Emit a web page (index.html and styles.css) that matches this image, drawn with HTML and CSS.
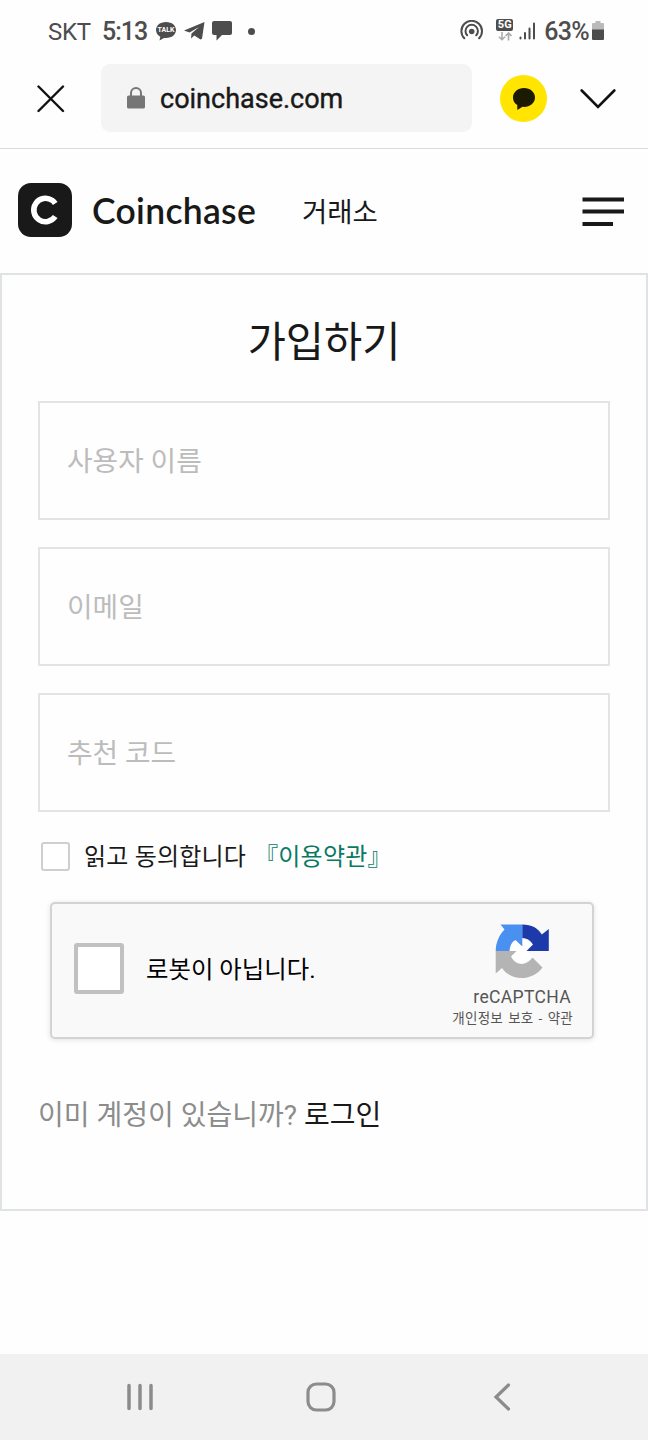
FILE: index.html
```
<!DOCTYPE html>
<html lang="ko">

<head>
    <meta charset="UTF-8">
    <meta name="viewport" content="width=device-width, initial-scale=1.0">
    <title>Coinchase</title>
    <link rel="stylesheet" href="styles.css">
</head>

<body>
    <div class="status-bar">
        <span class="carrier">SKT</span>
        <span class="time">5:13</span>
        <span class="talk-icon">
            <svg width="22" height="20" viewBox="0 0 22 20">
                <path fill="#4d4d4d" d="M11 1C5 1 1 4.600 1 9c0 2.900 1.700 5.300 4.300 6.700L4.500 19.500 9 16.900c.7.100 1.300.100 2 .100 6 0 10-3.600 10-8S17 1 11 1z" />
            </svg>
            <b>TALK</b>
        </span>
        <svg class="telegram-icon" width="21" height="18" viewBox="0 0 21 18">
            <path fill="#4d4d4d" d="M0 8.500 20.500 0 18 16.800 16.500 17.500 10.300 13.500 7 16.500 7.500 11.500 15 5 5.500 10.500z" />
        </svg>
        <svg class="sms-icon" width="20" height="20" viewBox="0 0 20 20">
            <path fill="#4d4d4d" d="M2 0H18Q20 0 20 2V12Q20 14 18 14H10L4.500 19.500V14H2Q0 14 0 12V2Q0 0 2 0z" />
        </svg>
        <span class="dot"></span>

        <div class="status-right">
            <svg class="hotspot-icon" width="24" height="20" viewBox="0 0 24 20">
                <g fill="none" stroke="#4d4d4d" stroke-width="2" stroke-linecap="round">
                    <path d="M4.300 18.300a10.300 10.300 0 1 1 14.800 0" />
                    <path d="M7.200 15.300a6.200 6.200 0 1 1 9 0" />
                </g>
                <circle cx="11.700" cy="11.500" r="2.800" fill="#4d4d4d" />
            </svg>
            <div class="network">
                <b>5G</b>
                <svg width="14" height="9" viewBox="0 0 14 9">
                    <path fill="none" stroke="#aaa" stroke-width="1.600" d="M4 0V7.500M1 4.700 4 7.700 7 4.700M10.500 8.500V1M7.500 4 10.500 1 13.500 4" />
                </svg>
            </div>
            <svg class="signal-icon" width="17" height="18" viewBox="0 0 17 18">
                <path stroke="#4d4d4d" stroke-width="2" stroke-linecap="round" d="M1.500 15.500V16.500M6 11V16.500M10.500 6.500V16.500M15 1.500V16.500" />
            </svg>
            <span class="percent">63%</span>
            <svg class="battery-icon" width="12" height="19" viewBox="0 0 12 19">
                <path fill="#bababa" d="M3.500 0h5v2H11q1 0 1 1V9H0V3q0-1 1-1h2.500z" />
                <path fill="#4d4d4d" d="M0 8.500H12V18q0 1-1 1H1q-1 0-1-1z" />
            </svg>
        </div>
    </div>

    <div class="browser-bar">
        <svg class="close-icon" width="28" height="28" viewBox="0 0 28 28">
            <path fill="none" stroke="#111" stroke-width="2.400" stroke-linecap="round" d="M1.500 1.500 26 26M26 1.500 1.500 26" />
        </svg>
        <div class="address">
            <svg width="18" height="22" viewBox="0 0 18 22">
                <path fill="none" stroke="#767676" stroke-width="2" d="M4 10V6a5 5 0 0 1 10 0v4" />
                <rect y="8.500" width="18" height="13" rx="1.500" fill="#767676" />
            </svg>
            <span>coinchase.com</span>
        </div>
        <div class="kakao">
            <svg width="22" height="22" viewBox="0 0 22 22">
                <path fill="#1c1a00" d="M11 0C4.800 0 0 4.200 0 9.400c0 3.400 1.700 6 4.300 7.600V22l5.200-3.200c.5.100 1 .100 1.500.100 6.200 0 11-4.300 11-9.500S17.200 0 11 0z" />
            </svg>
        </div>
        <svg class="down-icon" width="36" height="20" viewBox="0 0 36 20">
            <path fill="none" stroke="#111" stroke-width="2.600" stroke-linecap="round" d="M1.700 1.500 18 18 34.300 1.500" />
        </svg>
    </div>

    <header class="site-header">
        <svg class="logo" width="54" height="54" viewBox="0 0 54 54">
            <rect width="54" height="54" rx="13" fill="#191919" />
            <circle cx="27.500" cy="27" r="11.700" fill="none" stroke="#fff" stroke-width="5.600" pathLength="360" stroke-dasharray="292 68" transform="rotate(34 27.500 27)" />
        </svg>
        <span class="brand">Coinchase</span>
        <a class="exchange">거래소</a>
        <svg class="menu-icon" width="42" height="34" viewBox="0 0 42 34">
            <path stroke="#191919" stroke-width="4" d="M.5 6.500H42M.5 18.500H42M.5 31H31" />
        </svg>
    </header>

    <main class="signup">
        <h1>가입하기</h1>
        <form>
            <input type="text" placeholder="사용자 이름">
            <input type="text" placeholder="이메일">
            <input type="text" placeholder="추천 코드">
            <label class="agree">
                <span class="checkbox"></span>
                <span>읽고 동의합니다</span>
                <a>『이용약관』</a>
            </label>
        </form>

        <div class="captcha">
            <span class="captcha-box"></span>
            <span class="captcha-text">로봇이 아닙니다.</span>
            <div class="captcha-logo">
                <svg width="55" height="56" viewBox="0 0 55 56">
                    <path fill="#fff" d="M14 28 18 17 27 14 33 16 38 21 32 28 38 34 28 41 20 38 16 32z" />
                    <path fill="#4a90f0" d="M27.300 1.500V23.500L20.500 17C17 18.500 15 22.500 14.500 28H.7C.900 19.500 4 12 9.500 6.500L5.500 1.500z" />
                    <path fill="#1c3aa9" d="M27.300 1.500C36.500 1.500 43 5 46.800 11.500L53.800 6V28H31.500L38 21.500C35 17 31.500 15 27.300 15z" />
                    <path fill="#b4b4b4" d="M.7 28H21.500L16 33.500C20.500 43 31.500 43.500 37.500 34.500L47.500 44.500C37 58.500 16 58.500 7 45L.7 50.500z" />
                </svg>
                <span class="captcha-name">reCAPTCHA</span>
                <span class="captcha-links">개인정보 보호 - 약관</span>
            </div>
        </div>

        <p class="login">이미 계정이 있습니까? <a>로그인</a></p>
    </main>

    <nav class="nav-bar">
        <svg width="28" height="28" viewBox="0 0 28 28">
            <path stroke="#8c8c8c" stroke-width="3.500" stroke-linecap="round" d="M3 2.500V25.500M14 2.500V25.500M25 2.500V25.500" />
        </svg>
        <svg width="30" height="30" viewBox="0 0 30 30">
            <rect x="2" y="2" width="26" height="26" rx="8.500" fill="none" stroke="#8c8c8c" stroke-width="3.200" />
        </svg>
        <svg width="18" height="28" viewBox="0 0 18 28">
            <path fill="none" stroke="#8c8c8c" stroke-width="3.200" stroke-linecap="round" d="M15.500 2 3 14 15.500 26" />
        </svg>
    </nav>
</body>

</html>
```
FILE: styles.css
```
* {
    box-sizing: border-box;
}

body {
    margin: 0;
    min-height: 1440px;
    display: flex;
    flex-direction: column;
    background-color: #fefefe;
    color: #191919;
    font-family: Roboto, "Noto Sans CJK KR", sans-serif;
}

svg {
    display: block;
    flex-shrink: 0;
}

.status-bar {
    display: flex;
    align-items: center;
    height: 62px;
    padding: 0 44px 0 48px;
    color: #4d4d4d;
    font-size: 25px;
    line-height: 28px;
    white-space: nowrap;
}

.carrier {
    width: 54px;
    padding-top: 1px;
    font-size: 24px;
    letter-spacing: -0.3px;
}

.time {
    width: 53px;
    padding-top: 1px;
    font-weight: 500;
    letter-spacing: -1px;
}

.talk-icon {
    position: relative;
    width: 22px;
    margin-right: 7px;
}

.talk-icon b {
    position: absolute;
    top: 4px;
    left: 2.5px;
    color: #fff;
    font-size: 7px;
    line-height: 10px;
}

.telegram-icon {
    margin-right: 7px;
}

.dot {
    width: 7px;
    height: 7px;
    margin-left: 16px;
    border-radius: 50%;
    background-color: #4d4d4d;
}

.status-right {
    display: flex;
    align-items: center;
    margin-left: auto;
}

.hotspot-icon {
    margin-top: -2px;
}

.network {
    display: flex;
    flex-direction: column;
    align-items: center;
    gap: 1px;
    width: 17px;
    margin: -2px 6px 0 12px;
}

.network b {
    width: 17px;
    height: 12px;
    border-radius: 2px;
    background-color: #4d4d4d;
    color: #fff;
    font-size: 11px;
    line-height: 12px;
    text-align: center;
}

.percent {
    margin: 0 3px 0 8px;
    padding-top: 1px;
    font-weight: 500;
    letter-spacing: -0.7px;
}

.battery-icon {
    margin-top: -1px;
}

.browser-bar {
    display: flex;
    align-items: center;
    height: 87px;
    padding: 2px 32px 15px 37px;
    border-bottom: 1px solid #dadbdc;
}

.address {
    display: flex;
    align-items: center;
    gap: 15px;
    width: 371px;
    height: 68px;
    margin: -1px 28px 0 36px;
    padding-left: 26px;
    border-radius: 9px;
    background-color: #f4f4f4;
    color: #191919;
    font-size: 27px;
    -webkit-text-stroke: 0.4px #191919;
}

.address span {
    padding-top: 2px;
}

.kakao {
    display: flex;
    justify-content: center;
    align-items: center;
    width: 47px;
    height: 47px;
    border-radius: 50%;
    background-color: #ffe500;
}

.down-icon {
    margin-left: auto;
}

.site-header {
    display: flex;
    align-items: center;
    height: 124px;
    padding: 0 24px 2px 18px;
}

.brand {
    width: 210px;
    padding-left: 20px;
    font-family: Lato, sans-serif;
    font-size: 35.5px;
    font-weight: 600;
    letter-spacing: 0.3px;
}

.exchange {
    margin: -1px 0 0 20px;
    font-size: 27.5px;
}

.menu-icon {
    margin-left: auto;
}

.signup {
    height: 938px;
    padding: 38px 36px 0;
    border: 2px solid #dfe3e3;
}

h1 {
    margin: 0 0 28px;
    font-size: 41.5px;
    font-weight: 400;
    line-height: 60px;
    text-align: center;
}

input {
    display: block;
    width: 100%;
    height: 119px;
    margin-bottom: 27px;
    padding: 2px 27px 0;
    border: 2px solid #e3e4e4;
    background-color: #fefefe;
    font-family: inherit;
    font-size: 27.8px;
}

input::placeholder {
    color: #bcbcbc;
}

.agree {
    display: flex;
    align-items: center;
    height: 34px;
    padding-left: 3px;
    font-size: 24px;
    line-height: 34px;
    letter-spacing: 0.2px;
    white-space: nowrap;
}

.agree span:last-of-type,
.agree a {
    padding-top: 1px;
}

.checkbox {
    width: 29px;
    height: 29px;
    margin-right: 14px;
    border: 2px solid #cfcfcf;
    border-radius: 3px;
    background-color: #fff;
}

.agree a {
    margin-left: 8px;
    color: #087a64;
}

.captcha {
    display: flex;
    align-items: center;
    width: 544px;
    height: 137px;
    margin: 29px 0 0 12px;
    padding: 0 19px 4px 22px;
    border: 2px solid #d3d3d3;
    border-radius: 5px;
    background-color: #f9f9f9;
    box-shadow: 0 1px 4px 1px rgba(0, 0, 0, 0.08);
}

.captcha-box {
    width: 50px;
    height: 51px;
    border: 4px solid #c1c1c1;
    border-radius: 3px;
    background-color: #fff;
}

.captcha-text {
    margin: -2px 0 0 22px;
    color: #000;
    font-size: 24.4px;
}

.captcha-logo {
    display: flex;
    flex-direction: column;
    align-items: flex-end;
    margin-left: auto;
    padding-top: 13px;
    color: #555;
    white-space: nowrap;
}

.captcha-logo svg {
    margin: 0 23px 6px 0;
}

.captcha-name {
    margin-right: 2px;
    font-size: 17.5px;
    line-height: 24px;
    letter-spacing: 0.35px;
}

.captcha-links {
    font-size: 13.5px;
    line-height: 18px;
    letter-spacing: 0.25px;
    word-spacing: 1.5px;
}

.login {
    margin: 57px 0 0;
    color: #8c8c8c;
    font-size: 28px;
    line-height: 40px;
}

.login a {
    color: #191919;
}

.nav-bar {
    display: flex;
    align-items: center;
    gap: 152px;
    height: 86px;
    margin-top: auto;
    padding-left: 126px;
    background-color: #f1f1f1;
}

.nav-bar svg:last-child {
    margin-left: 5px;
}
```
